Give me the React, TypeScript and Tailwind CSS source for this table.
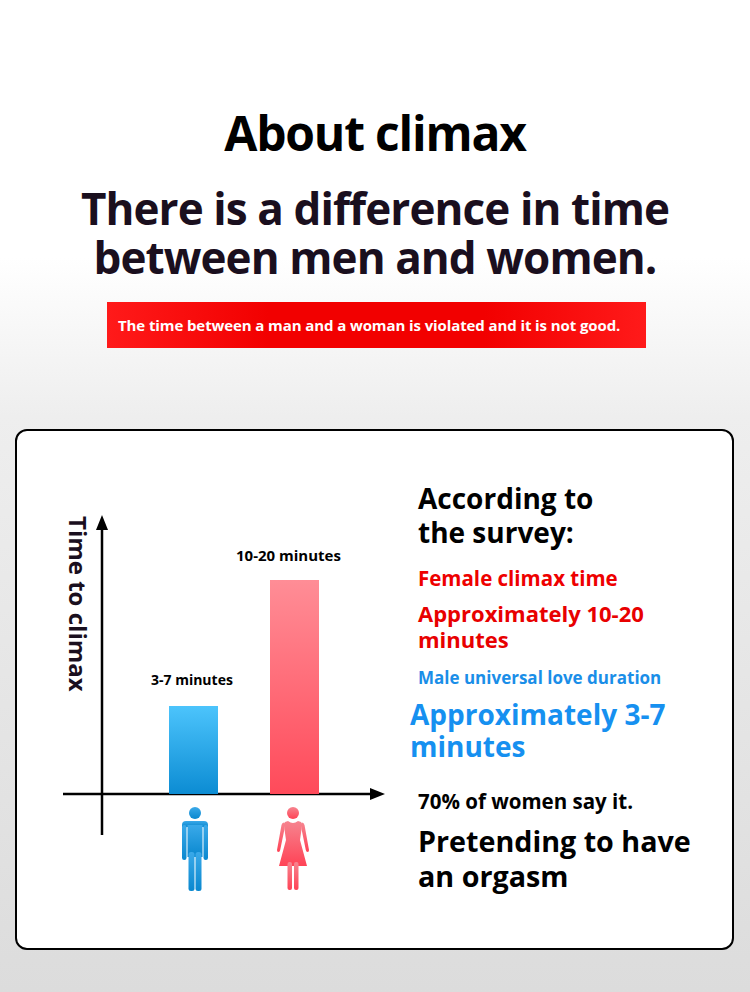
import React from "react";

const font = { fontFamily: '"Open Sans", "Noto Sans", sans-serif' };

const ManIcon = () => (
  <svg width="28" height="86" viewBox="0 0 28 86">
    <defs>
      <linearGradient id="manGrad" x1="0" y1="0" x2="0" y2="1">
        <stop offset="0%" stopColor="#3aa9e9" />
        <stop offset="100%" stopColor="#0a88cf" />
      </linearGradient>
    </defs>
    <g fill="url(#manGrad)">
      <circle cx="14" cy="7" r="6" />
      <path d="M5 15 H23 Q27 15 27 19 V21 H1 V19 Q1 15 5 15 Z" />
      <rect x="1" y="19" width="4.5" height="35" rx="2.2" />
      <rect x="22.5" y="19" width="4.5" height="35" rx="2.2" />
      <rect x="6.5" y="19" width="15" height="32" />
      <rect x="7.5" y="46" width="6" height="39" rx="2.5" />
      <rect x="14.5" y="46" width="6" height="39" rx="2.5" />
    </g>
  </svg>
);

const WomanIcon = () => (
  <svg width="34" height="86" viewBox="0 0 34 86">
    <defs>
      <linearGradient id="womanGrad" x1="0" y1="0" x2="0" y2="1">
        <stop offset="0%" stopColor="#f6848f" />
        <stop offset="100%" stopColor="#ff4356" />
      </linearGradient>
    </defs>
    <g fill="url(#womanGrad)">
      <circle cx="17" cy="9" r="6" />
      <path d="M12 17 Q17 21 22 17 L25 18 Q26.5 19 26 22 L24 36 L31 62 H3 L10 36 L8 22 Q7.5 19 9 18 Z" />
      <path d="M8 18.5 Q6 18.5 5.5 21 L1 46 Q0.8 48 2.5 48 Q3.8 48 4.2 46 L8.5 25 Z" />
      <path d="M26 18.5 Q28 18.5 28.5 21 L33 46 Q33.2 48 31.5 48 Q30.2 48 29.8 46 L25.5 25 Z" />
      <rect x="11.5" y="58" width="4.5" height="28" rx="2" />
      <rect x="18" y="58" width="4.5" height="28" rx="2" />
    </g>
  </svg>
);

const Chart = () => (
  <div className="relative h-full w-[401px]">
    <svg className="absolute left-0 top-0" width="401" height="517" viewBox="0 0 401 517">
      <line x1="85" y1="96" x2="85" y2="404" stroke="#000" strokeWidth="2.5" />
      <polygon points="85,84 79,99 91,99" fill="#000" />
      <line x1="46" y1="363" x2="356" y2="363" stroke="#000" strokeWidth="2.5" />
      <polygon points="368,363 353,357 353,369" fill="#000" />
    </svg>

    <div className="absolute left-[49px] top-[85px] text-[24px] font-bold leading-none text-[#1a0f1e] [writing-mode:vertical-rl]">
      Time to climax
    </div>

    <div className="absolute left-[134px] top-[239px] text-[14px] font-bold leading-[20px] text-black">3-7 minutes</div>
    <div className="absolute left-[219px] top-[113px] text-[15px] font-bold leading-[22px] text-black">10-20 minutes</div>

    <div className="absolute left-[152px] top-[275px] h-[88px] w-[49px] bg-[linear-gradient(to_bottom,#4cc4fc,#0c8cd3)]" />
    <div className="absolute left-[253px] top-[149px] h-[214px] w-[49px] bg-[linear-gradient(to_bottom,#ff8d96,#ff4a5a)]" />

    <div className="absolute left-[164px] top-[375px]">
      <ManIcon />
    </div>
    <div className="absolute left-[259px] top-[373px]">
      <WomanIcon />
    </div>
  </div>
);

const Survey = () => (
  <div className="flex flex-1 flex-col pt-[50px]">
    <p className="text-[28px] font-bold leading-[34px] text-black">
      According to
      <br />
      the survey:
    </p>
    <p className="mt-[15px] text-[20.5px] font-bold leading-[28px] text-[#ee0000]">Female climax time</p>
    <p className="mt-[8px] text-[22px] font-bold leading-[26px] text-[#e80000]">
      Approximately 10-20
      <br />
      minutes
    </p>
    <p className="mt-[13px] text-[17px] font-bold leading-[26px] text-[#1a8ee8]">Male universal love duration</p>
    <p className="-ml-[8px] mt-[7px] text-[28px] font-bold leading-[32px] text-[#1690f0]">
      Approximately 3-7
      <br />
      minutes
    </p>
    <p className="mt-[25px] text-[20.5px] font-bold leading-[28px] text-black">70% of women say it.</p>
    <p className="mt-[8px] text-[28.7px] font-bold leading-[35px] text-black">
      Pretending to have
      <br />
      an orgasm
    </p>
  </div>
);

export default function App() {
  return (
    <div
      style={font}
      className="h-[992px] w-[750px] overflow-hidden bg-[linear-gradient(to_bottom,#ffffff_0%,#ffffff_26%,#eeeeee_42%,#dcdcdc_100%)]"
    >
      <h1 className="pt-[105px] text-center text-[48px] font-bold leading-[56px] tracking-[-1.2px] text-black">
        About climax
      </h1>
      <h2 className="mt-[23px] text-center text-[44px] font-bold leading-[49px] tracking-[-0.9px] text-[#1a0f1e]">
        There is a difference in time
        <br />
        between men and women.
      </h2>
      <div className="ml-[107px] mt-[20px] h-[46px] w-[539px] bg-[linear-gradient(to_right,#ff1a1a,#f20000_30%,#f20000_70%,#ff1a1a)] pl-[11px] text-[15px] font-bold leading-[46px] tracking-[-0.1px] text-white">
        The time between a man and a woman is violated and it is not good.
      </div>
      <div className="ml-[15px] mt-[81px] flex h-[521px] w-[719px] rounded-[12px] border-2 border-black bg-white">
        <Chart />
        <Survey />
      </div>
    </div>
  );
}
